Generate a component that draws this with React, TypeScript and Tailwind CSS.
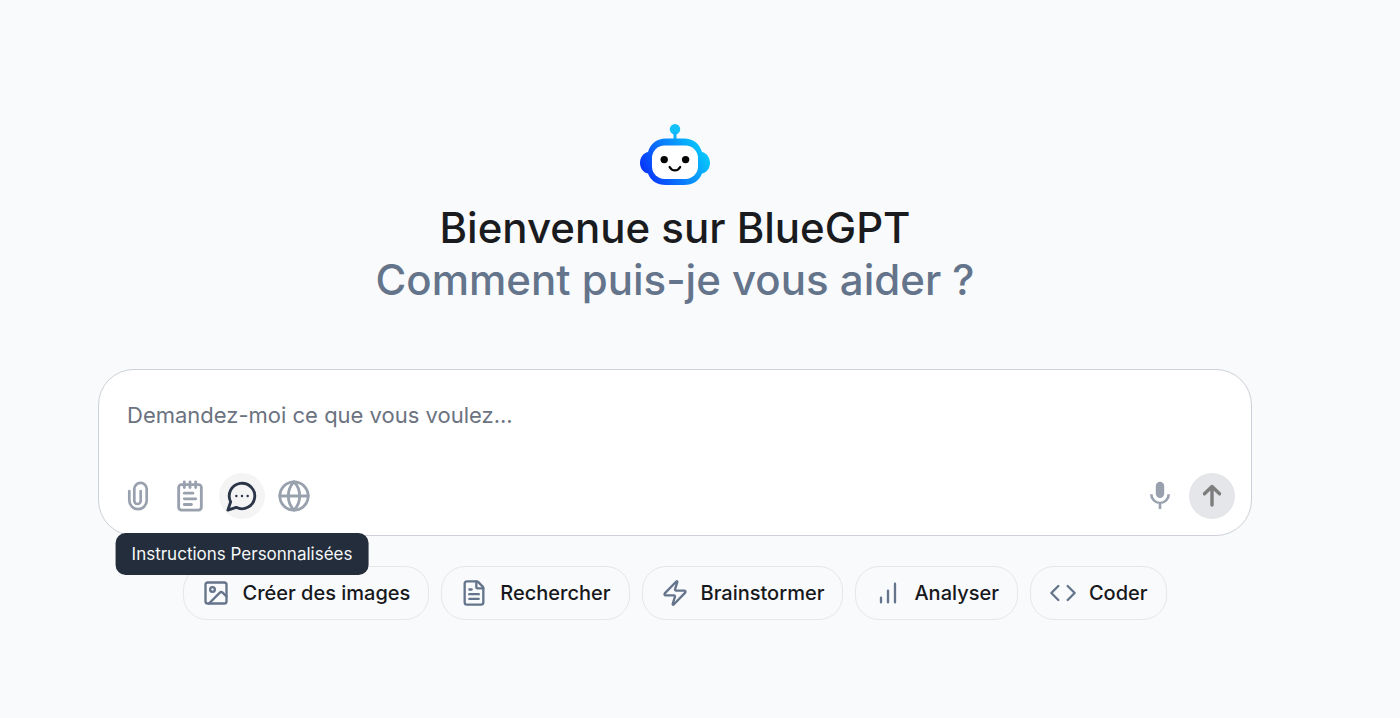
import type { ReactNode } from "react";
import { Code, FileText, Globe, Image as ImageIcon, NotepadText, Zap } from "lucide-react";

function RobotLogo() {
  return (
    <svg viewBox="20 14 70 61" className="h-[61px] w-[70px]" aria-hidden="true">
      <defs>
        <linearGradient id="robot" gradientUnits="userSpaceOnUse" x1="26" y1="66" x2="84" y2="34">
          <stop offset="0" stopColor="#0836fb" />
          <stop offset="0.5" stopColor="#0a84fb" />
          <stop offset="1" stopColor="#06cdfd" />
        </linearGradient>
      </defs>
      <circle cx="55" cy="19.2" r="5.2" fill="#12c0fa" />
      <rect x="53.5" y="22" width="3" height="9" fill="#12b0fa" />
      <path
        fill="url(#robot)"
        d="M46 28.5h18c9 0 15.500 5 18 13.500 5 1 8 6 8 11s-3 9.500-8 10.500C79.500 70.500 73 75 64 75H46c-9 0-15.500-4.500-18-11.500C23 62.500 20 58 20 53s3-10 8-11C30.500 33.500 37 28.500 46 28.500z"
      />
      <rect x="32" y="35.5" width="46" height="33.5" rx="12.5" fill="#fff" />
      <circle cx="44.2" cy="49.6" r="3.7" fill="#050505" />
      <circle cx="65.6" cy="49.6" r="3.7" fill="#050505" />
      <path d="M49.6 57c2.4 4.4 8.2 4.4 10.6 0" fill="none" stroke="#050505" strokeWidth="2.2" strokeLinecap="round" />
    </svg>
  );
}

function ClipIcon() {
  return (
    <svg viewBox="0 0 36 36" className="size-9" fill="none" stroke="currentColor" strokeWidth="2.7" strokeLinecap="round" aria-hidden="true">
      <path d="M9.3 13v9.5a8.7 8.7 0 0 0 17.4 0V11.1a6.2 6.2 0 0 0-12.4 0v11.7a3.2 3.2 0 0 0 6.4 0V13" />
    </svg>
  );
}

function ChatIcon() {
  return (
    <svg viewBox="0 0 24 24" className="size-[34px]" fill="none" stroke="currentColor" strokeWidth="2" strokeLinecap="round" strokeLinejoin="round" aria-hidden="true">
      <path d="M7.9 20A9 9 0 1 0 4 16.1L2 22Z" />
      <path d="M8 12h.01M12 12h.01M16 12h.01" strokeWidth="1.7" />
    </svg>
  );
}

function MicIcon() {
  return (
    <svg viewBox="0 0 36 36" className="size-9" fill="none" stroke="currentColor" strokeWidth="2.6" aria-hidden="true">
      <rect x="13.8" y="3.7" width="8.4" height="16.2" rx="4.2" fill="currentColor" stroke="none" />
      <path d="M9.3 16.3a8.7 8.7 0 0 0 17.4 0M18 25v6" />
    </svg>
  );
}

function SendIcon() {
  return (
    <svg viewBox="0 0 36 36" className="size-9" fill="none" stroke="currentColor" strokeWidth="3.4" strokeLinecap="round" strokeLinejoin="round" aria-hidden="true">
      <path d="M18 27V8.6M10.5 15.8 18 8.6l7.5 7.2" />
    </svg>
  );
}

function BarsIcon() {
  return (
    <svg viewBox="0 0 24 24" className="size-7" fill="none" stroke="currentColor" strokeWidth="2" strokeLinecap="round" aria-hidden="true">
      <path d="M18 20V4M12 20V10M6 20v-4" />
    </svg>
  );
}

type ToolButtonProps = {
  label: string;
  children: ReactNode;
  active?: boolean;
};

function ToolButton({ label, children, active = false }: ToolButtonProps) {
  return (
    <button
      type="button"
      aria-label={label}
      className={
        active
          ? "relative flex size-[46px] items-center justify-center rounded-full bg-[#f4f4f4] text-[#2a3547]"
          : "flex size-[46px] items-center justify-center rounded-full text-gray-400"
      }
    >
      {children}
      {active && (
        <span
          role="tooltip"
          className="absolute top-full left-1/2 z-10 mt-[14px] -translate-x-1/2 rounded-[10px] bg-[#232d3b] px-4 py-2 text-[17px] leading-[26px] whitespace-nowrap text-[#f5f7f9]"
        >
          {label}
        </span>
      )}
    </button>
  );
}

const suggestions = [
  { label: "Créer des images", icon: <ImageIcon className="size-7" /> },
  { label: "Rechercher", icon: <FileText className="size-7" /> },
  { label: "Brainstormer", icon: <Zap className="size-7" /> },
  { label: "Analyser", icon: <BarsIcon /> },
  { label: "Coder", icon: <Code className="size-7" /> },
];

export default function App() {
  return (
    <main className="min-h-screen bg-[#f9fafc] pt-[124px] pr-[148px] pb-16 pl-[98px] font-['Inter',sans-serif]">
      {/* Welcome */}
      <header className="flex flex-col items-center text-center">
        <RobotLogo />
        <h1 className="mt-[17px] text-[42px] leading-[52px] font-medium text-[#1a1b1e]">
          Bienvenue sur BlueGPT
          <span className="block text-[#64748b]">Comment puis-je vous aider ?</span>
        </h1>
      </header>

      {/* Prompt box */}
      <form className="mt-[63px] rounded-[36px] border border-[#cdd0d6] bg-white px-4 pt-7 pb-4" onSubmit={(e) => e.preventDefault()}>
        <textarea
          rows={1}
          aria-label="Message"
          placeholder="Demandez-moi ce que vous voulez..."
          className="block h-[75px] w-full resize-none bg-transparent px-3 text-[22px] leading-[34px] outline-none placeholder:text-[#6b7280]"
        />
        <div className="flex items-center justify-between">
          <div className="flex gap-[6px]">
            <ToolButton label="Joindre un fichier">
              <ClipIcon />
            </ToolButton>
            <ToolButton label="Modèles">
              <NotepadText className="size-[34px]" />
            </ToolButton>
            <ToolButton label="Instructions Personnalisées" active>
              <ChatIcon />
            </ToolButton>
            <ToolButton label="Recherche web">
              <Globe className="size-[34px]" />
            </ToolButton>
          </div>
          <div className="flex gap-[6px]">
            <ToolButton label="Dicter">
              <MicIcon />
            </ToolButton>
            <button
              type="submit"
              aria-label="Envoyer"
              className="flex size-[46px] items-center justify-center rounded-full bg-[#e5e6e9] text-[#7d7d7d]"
            >
              <SendIcon />
            </button>
          </div>
        </div>
      </form>

      {/* Suggestions */}
      <div className="mt-[30px] flex flex-wrap justify-center gap-3">
        {suggestions.map(({ label, icon }) => (
          <button
            key={label}
            type="button"
            className="flex h-[54px] items-center gap-3 rounded-[24px] border border-[#e6e7ea] px-[18px] text-xl font-medium text-[#17181b]"
          >
            <span className="text-[#64748b]">{icon}</span>
            {label}
          </button>
        ))}
      </div>
    </main>
  );
}
